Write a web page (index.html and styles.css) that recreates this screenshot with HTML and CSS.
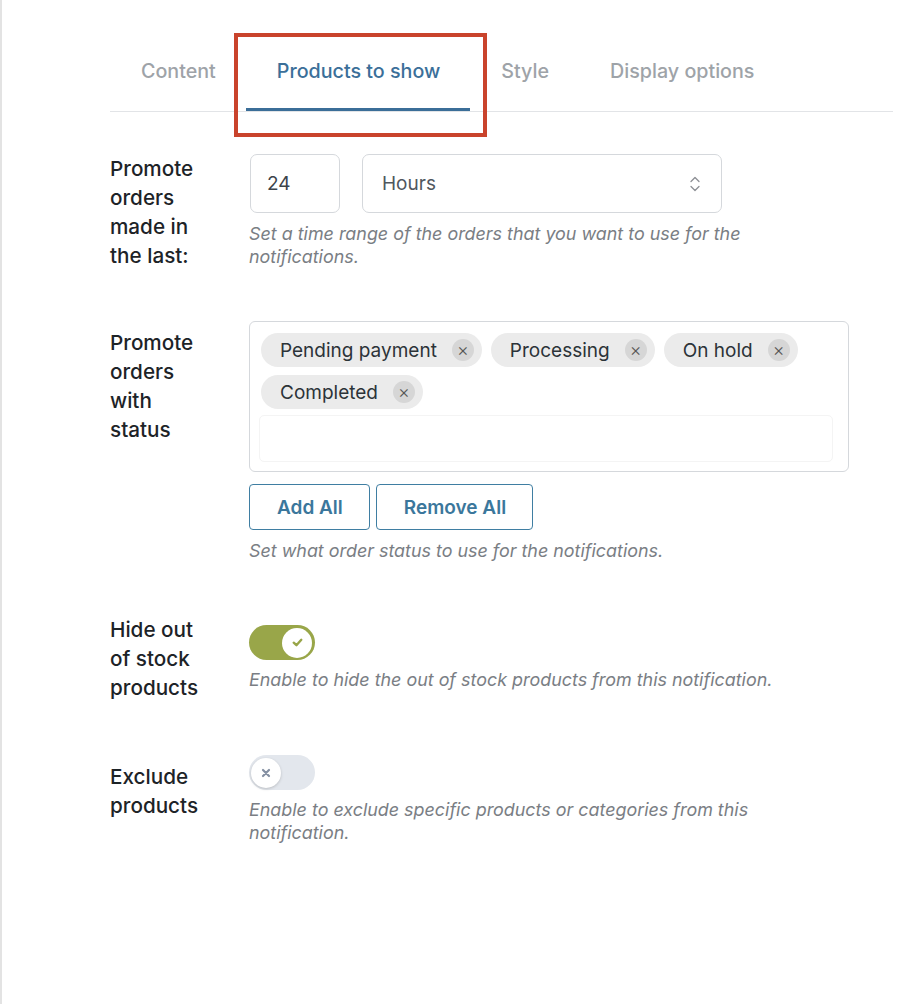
FILE: index.html
```html
<!DOCTYPE html>
<html lang="en">
<head>
    <meta charset="UTF-8">
    <meta name="viewport" content="width=device-width, initial-scale=1.0">
    <title>Products to show</title>
    <link rel="stylesheet" href="styles.css">
</head>
<body>
    <div class="panel">
        <nav class="tabs">
            <a class="tab" href="#">Content</a>
            <a class="tab active" href="#">Products to show<span class="highlight"></span></a>
            <a class="tab" href="#">Style</a>
            <a class="tab" href="#">Display options</a>
        </nav>

        <div class="form">
            <!-- time range -->
            <div class="row">
                <div class="row-label flush">Promote orders made in the last:</div>
                <div class="row-field">
                    <div class="range">
                        <div class="box number">24</div>
                        <div class="box select">
                            <span>Hours</span>
                            <svg class="chevron" width="12" height="20" viewBox="0 0 12 20">
                                <path d="M2 7.5 L6 3.5 L10 7.5" fill="none" stroke="#8c8f94" stroke-width="1.3" stroke-linecap="round" stroke-linejoin="round"/>
                                <path d="M2 12.5 L6 16.5 L10 12.5" fill="none" stroke="#8c8f94" stroke-width="1.3" stroke-linecap="round" stroke-linejoin="round"/>
                            </svg>
                        </div>
                    </div>
                    <p class="help">Set a time range of the orders that you want to use for the notifications.</p>
                </div>
            </div>

            <!-- status -->
            <div class="row status-row">
                <div class="row-label">Promote orders with status</div>
                <div class="row-field">
                    <div class="multi">
                        <div class="chips">
                            <span class="chip">Pending payment<i class="chip-x">&times;</i></span>
                            <span class="chip">Processing<i class="chip-x">&times;</i></span>
                            <span class="chip">On hold<i class="chip-x">&times;</i></span>
                            <span class="chip">Completed<i class="chip-x">&times;</i></span>
                        </div>
                        <div class="search"></div>
                    </div>
                    <div class="buttons">
                        <button class="btn">Add All</button>
                        <button class="btn">Remove All</button>
                    </div>
                    <p class="help">Set what order status to use for the notifications.</p>
                </div>
            </div>

            <!-- out of stock -->
            <div class="row">
                <div class="row-label flush">Hide out of stock products</div>
                <div class="row-field padded">
                    <span class="toggle on">
                        <span class="knob">
                            <svg width="13" height="13" viewBox="0 0 12 12"><path d="M2.5 6.2 L5 8.5 L9.5 3.5" fill="none" stroke="#98a548" stroke-width="2.2" stroke-linecap="round" stroke-linejoin="round"/></svg>
                        </span>
                    </span>
                    <p class="help">Enable to hide the out of stock products from this notification.</p>
                </div>
            </div>

            <!-- exclude -->
            <div class="row">
                <div class="row-label">Exclude products</div>
                <div class="row-field">
                    <span class="toggle off">
                        <span class="knob">
                            <svg width="12" height="12" viewBox="0 0 12 12"><path d="M3 3 L9 9 M9 3 L3 9" fill="none" stroke="#8590a3" stroke-width="2.2" stroke-linecap="round"/></svg>
                        </span>
                    </span>
                    <p class="help">Enable to exclude specific products or categories from this notification.</p>
                </div>
            </div>
        </div>
    </div>
</body>
</html>
```
FILE: styles.css
```css
body {
    margin: 0;
    font-family: Inter, "Noto Sans", sans-serif;
    color: #1d2327;
    background: #fff;
}

.panel {
    min-height: 100vh;
    box-sizing: border-box;
    border-left: 2px solid #e3e3e3;
    padding: 0 19px 0 108px;
}

/* tabs */
.tabs {
    display: flex;
    padding-top: 30px;
    border-bottom: 1px solid #e2e4e7;
}

.tab {
    position: relative;
    padding: 29px 30px 25px 31px;
    font-size: 19.7px;
    line-height: 24px;
    font-weight: 500;
    color: #9ea3a8;
    text-decoration: none;
    border-bottom: 3px solid transparent;
}

.tab.active {
    color: #3b6f99;
    border-bottom-color: #3b6e98;
}

.highlight {
    position: absolute;
    left: -12px;
    top: 3px;
    width: 253px;
    height: 104px;
    box-sizing: border-box;
    border: 4px solid #c9432c;
}

/* form rows */
.form {
    padding-top: 42px;
}

.row {
    display: grid;
    grid-template-columns: 139px 1fr;
    align-items: start;
}

.row + .row {
    margin-top: 53px;
}

.row.status-row {
    margin-top: 51px;
}

.row-label {
    max-width: 100px;
    padding-top: 7px;
    font-size: 20.7px;
    line-height: 29px;
    font-weight: 500;
    color: #1d2327;
}

.row-label.flush {
    padding-top: 0;
}

.row-field.padded {
    padding-top: 10px;
}

.help {
    margin: 9px 0 0;
    max-width: 540px;
    font-size: 17.9px;
    line-height: 23px;
    font-style: italic;
    color: #7a7e84;
}

/* time range */
.range {
    display: flex;
    gap: 22px;
}

.box {
    box-sizing: border-box;
    height: 59px;
    border: 1px solid #d5d8dc;
    border-radius: 7px;
    display: flex;
    align-items: center;
    font-size: 19px;
    color: #3c434a;
}

.number {
    width: 90px;
    margin-left: 1px;
    padding-left: 16px;
}

.select {
    width: 360px;
    padding: 0 20px 0 19px;
    justify-content: space-between;
    color: #50575e;
}

/* multi select */
.multi {
    width: 600px;
    box-sizing: border-box;
    border: 1px solid #d5d8dc;
    border-radius: 6px;
    padding: 11px 11px 9px;
}

.chips {
    display: flex;
    flex-wrap: wrap;
    gap: 8px 9px;
}

.chip {
    display: inline-flex;
    align-items: center;
    height: 34px;
    padding: 0 8px 0 19px;
    border-radius: 17px;
    background: #ebebeb;
    font-size: 19px;
    color: #2c3338;
}

.chip-x {
    width: 22px;
    height: 22px;
    margin-left: 15px;
    border-radius: 50%;
    background: #d6d6d6;
    display: flex;
    align-items: center;
    justify-content: center;
    font-style: normal;
    font-size: 18px;
    font-weight: 300;
    line-height: 1;
    color: #555;
}

.search {
    height: 47px;
    box-sizing: border-box;
    margin: 6px 4px 0 -2px;
    border: 1px solid #f4f4f4;
    border-radius: 5px;
}

.buttons {
    display: flex;
    gap: 6px;
    margin-top: 12px;
}

.btn {
    height: 46px;
    padding: 0 26px 0 27px;
    border: 1px solid #3f7ea2;
    border-radius: 4px;
    background: #fff;
    font-family: inherit;
    font-size: 19px;
    font-weight: 600;
    color: #3b779c;
}

/* toggles */
.toggle {
    display: flex;
    align-items: center;
    width: 66px;
    height: 35px;
    box-sizing: border-box;
    padding: 0 3px;
    border-radius: 18px;
}

.toggle.on {
    background: #99a649;
    justify-content: flex-end;
}

.toggle.off {
    background: #e3e7ed;
    padding: 0 2px;
}

.knob {
    width: 30px;
    height: 30px;
    border-radius: 50%;
    background: #fff;
    display: flex;
    align-items: center;
    justify-content: center;
}

.toggle.off .knob {
    box-shadow: 0 1px 3px rgba(0, 0, 0, 0.18);
}

.toggle + .help {
    margin-top: 8px;
}
```
